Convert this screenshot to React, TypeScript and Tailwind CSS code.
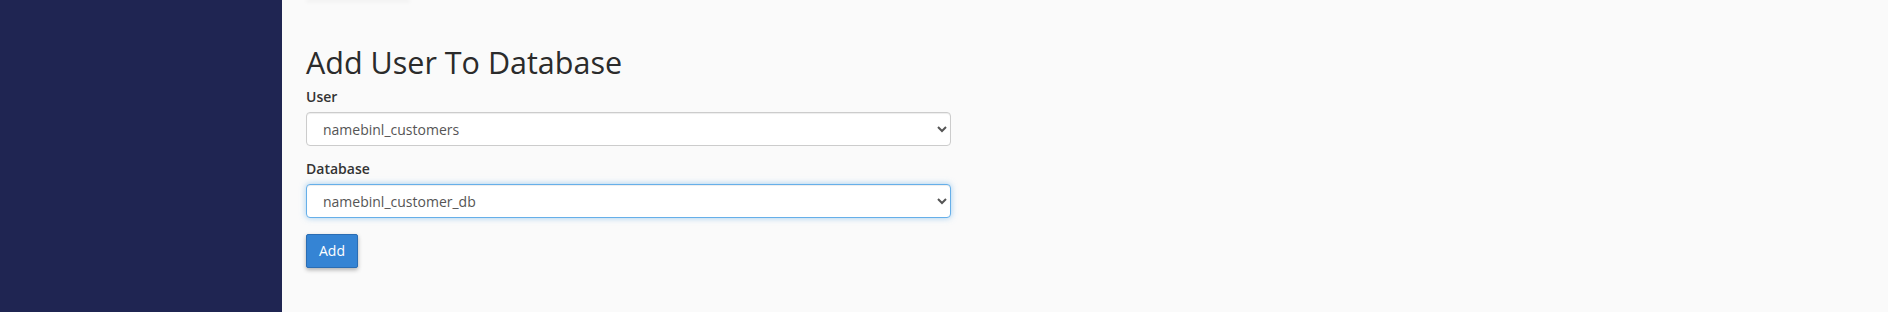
import React from 'react'

const users = ['namebinl_customers']
const databases = ['namebinl_customer_db']

export default function App() {
  return (
    <div className="flex h-[312px] w-full bg-[#fafafa] font-['Open_Sans',sans-serif] text-[#333]">
      <aside className="w-[282px] shrink-0 bg-[#1f2552]" />

      <main className="flex-1 pl-[24px]">
        {/* tail of the button above, only its shadow shows */}
        <div className="-mt-px h-px w-[104px] bg-[#fafafa] shadow-[0_1px_4px_rgba(0,0,0,0.14)]" />

        <h2 className="mt-[46px] text-[30.5px] leading-[33px] font-normal text-[#2b2b2b]">Add User To Database</h2>

        <form className="mt-[8px] w-[645px]">
          <div className="mb-[13px]">
            <label htmlFor="user" className="mb-[5px] block text-sm leading-5 font-semibold text-[#333]">
              User
            </label>
            <select
              id="user"
              className="block h-[34px] w-full rounded border border-[#ccc] bg-white px-3 text-sm text-[#555] shadow-[inset_0_1px_1px_rgba(0,0,0,0.075)]"
            >
              {users.map((u) => (
                <option key={u}>{u}</option>
              ))}
            </select>
          </div>

          <div className="mb-[16px]">
            <label htmlFor="db" className="mb-[5px] block text-sm leading-5 font-semibold text-[#333]">
              Database
            </label>
            <select
              id="db"
              className="block h-[34px] w-full rounded border border-[#66afe9] bg-white px-3 text-sm text-[#555] shadow-[inset_0_1px_1px_rgba(0,0,0,0.075),0_0_6px_rgba(102,175,233,0.6)] outline-none"
            >
              {databases.map((d) => (
                <option key={d}>{d}</option>
              ))}
            </select>
          </div>

          <button
            type="button"
            className="h-[34px] w-[52px] rounded-[2px] border border-[#2b6db3] bg-[#3584d4] text-sm text-white shadow-[0_2px_4px_rgba(0,0,0,0.3)]"
          >
            Add
          </button>
        </form>
      </main>
    </div>
  )
}
